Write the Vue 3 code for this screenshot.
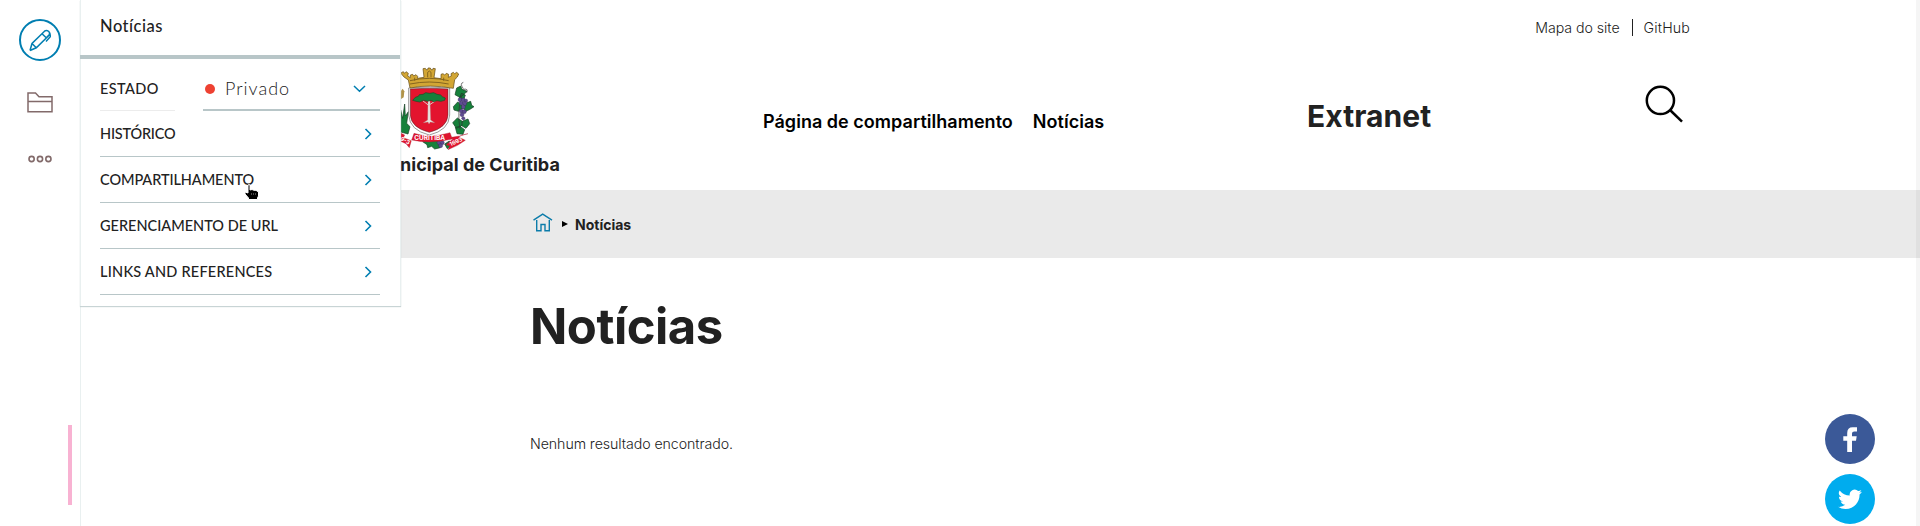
<script setup>
const sections = [
  { label: 'HISTÓRICO', cls: 'historico' },
  { label: 'COMPARTILHAMENTO', cls: 'compart' },
  { label: 'GERENCIAMENTO DE URL', cls: 'url' },
  { label: 'LINKS AND REFERENCES', cls: 'links' },
]
</script>

<template>
  <div class="page">
    <aside class="toolbar">
      <button class="edit" aria-label="Editar">
        <svg width="22" height="23" viewBox="0 0 22 23" fill="none" stroke="#007eb1" stroke-width="1.5">
          <path d="M1 21.5L3 14.5L15.500 2.200Q17.500 .6 19.500 2.300Q21.500 4.300 19.800 6.500L7.300 18.800L1 21.500M3 14.500L7.300 18.800M13 4.700L17.500 9M17.500 8.500L21 5L21.500 7.500L17 12.500" />
        </svg>
      </button>
      <svg class="folder" width="26" height="21" viewBox="0 0 26 21" fill="none" stroke="#826a6a" stroke-width="1.5">
        <path d="M1 1H8.500L12 4.700H25V19.800H1ZM1 9.500H25" />
      </svg>
      <svg class="more" width="24" height="8" viewBox="0 0 24 8" fill="none" stroke="#826a6a" stroke-width="1.6">
        <circle cx="3.600" cy="4" r="2.600" /><circle cx="12" cy="4" r="2.600" /><circle cx="20.400" cy="4" r="2.600" />
      </svg>
      <span class="handle"></span>
    </aside>

    <main class="site">
      <header class="header">
        <div class="toplinks">
          <span class="map">Mapa do site</span><i class="sep"></i><span class="git">GitHub</span>
        </div>
        <div class="brandrow">
          <div class="logo">
            <svg class="crest" width="80" height="95" viewBox="0 0 240 285">
              <!-- vine and wheat -->
              <g fill="#16813b" stroke="#153d22" stroke-width="2">
                <path d="M2 150L8 175L14 132L16 168L25 155L20 190L30 200L24 222L2 216Z" />
                <path d="M170 84l12-6 4 10 15 6-10 10-12 8-14-8ZM184 100l12 5-4 12-14-2ZM160 140l13-14 12 8 4 10-14 10-13-4ZM196 130l16-6 3 12 7 4-12 8-12 6-9-9ZM158 188l14-14 15 10-3 14-15 7ZM188 183l16-6 5 14-11 14-13-8ZM166 202l14-3 14 10-5 14-18-2Z" />
                <path d="M68 245l16-5 16 3 18-4-4 12 7 12-17 4-9-8-12 4-2-9ZM134 252l14-9 6 12-12 11Z" />
              </g>
              <path d="M190 86Q178 70 190 67M190 88Q206 85 200 98M187 100Q170 150 180 208" fill="none" stroke="#333" stroke-width="2" />
              <g fill="#5e4b92" stroke="#30284f" stroke-width="1">
                <circle cx="180" cy="119" r="6" /><circle cx="190" cy="120" r="6" /><circle cx="198" cy="122" r="5" /><circle cx="184" cy="130" r="6" /><circle cx="194" cy="131" r="6" /><circle cx="190" cy="141" r="6" />
                <circle cx="184" cy="153" r="6" /><circle cx="193" cy="155" r="6" /><circle cx="186" cy="164" r="6" /><circle cx="190" cy="175" r="5" /><circle cx="117" cy="248" r="6" /><circle cx="127" cy="248" r="6" /><circle cx="122" cy="257" r="6" />
              </g>
              <path d="M2 94l6-8 5 8-2 18-9 6Z" fill="#b19348" />
              <!-- shield -->
              <path d="M26 84Q88 78 149 84V165Q147 211 88 225Q29 211 26 165Z" fill="#fff" stroke="#666" stroke-width="2" />
              <path d="M31 87Q88 82 144 87V165Q142 203 88 217Q33 203 31 165Z" fill="#e3142e" stroke="#4b2020" stroke-width="1.500" />
              <path d="M84 122L83 180L70 188L84 186L87 192L91 186L104 188L92 180L90 122Z" fill="#e9e4e0" stroke="#b08080" stroke-width="1" />
              <path d="M68 122L86 136L107 122" fill="none" stroke="#d9c9c4" stroke-width="3" />
              <path d="M38 121l8-9 9-3 3-5 11-1 8-5 12 2 12-2 10 5 11 2 5 5 9 4-2 7-11 3-12-2-10 3-8-4-11 3-11-3-12 5-11-2Z" fill="#16813b" stroke="#1c4a26" stroke-width="2" />
              <!-- mural crown -->
              <path d="M2 39l8-4 3 5 5-5 7 5-2 8 8 5 0-8 7-2 3 5 7-4 5 5-1 6 20-3-3-26 7-1 2 4h5l1-5h7l2 5h5l1-4 7 1-4 27 21 3V43l6-2 5 4 5-5 7 3-1 9 9-4-1-7 7-4 4 4 6-4 6 5-4 9-8 8-4 26Q88 72 30 84L25 60L12 51Z" fill="#d2a634" stroke="#5e4510" stroke-width="2" />
              <path d="M30 62Q88 48 146 62M30 72Q88 60 146 72M83 52V37q5-8 10 0v15M44 62v-9M131 62v-9" fill="none" stroke="#76591a" stroke-width="2.500" />
              <!-- ribbon -->
              <g fill="#df142f" stroke="#a3142b" stroke-width="1">
                <path d="M2 219L14 225L10 233L34 242L28 263L18 251L2 244Z" />
                <path d="M204 221L187 225L176 231L196 241Q174 258 144 269L149 258L138 254L158 238L154 232Q176 230 204 221Z" />
                <path d="M42 220Q90 236 150 218L157 237Q91 253 35 240Z" />
              </g>
              <text x="43" y="240" class="ribbon" textLength="92" lengthAdjust="spacingAndGlyphs">CURITIBA</text>
              <text x="152" y="259" class="ribbon year" transform="rotate(-24 152 259)">1693</text>
              <text x="0" y="240" class="ribbon year" transform="rotate(28 0 240)">9-3</text>
            </svg>
            <strong class="city">nicipal de Curitiba</strong>
          </div>
          <nav class="nav"><span class="n1">Página de compartilhamento</span><span class="n2">Notícias</span></nav>
          <strong class="extranet">Extranet</strong>
          <svg class="search" width="38" height="38" viewBox="0 0 38 38" fill="none" stroke="#000" stroke-width="2.500">
            <circle cx="15.400" cy="15.400" r="13.600" /><path d="M25 25L37 36.700" />
          </svg>
        </div>
      </header>

      <div class="crumbs">
        <svg width="20" height="19" viewBox="0 0 20 19" fill="none" stroke="#0c7caa" stroke-width="1.400">
          <path d="M.5 7.200L9.700 1.200L19 7.200M3.700 7V17.700H8V11.500H12V17.700H16.300V7" />
        </svg>
        <i class="arrow"></i>
        <strong>Notícias</strong>
      </div>

      <section class="content">
        <h1>Notícias</h1>
        <p>Nenhum resultado encontrado.</p>
      </section>
    </main>

    <section class="panel">
      <h2>Notícias</h2>
      <div class="body">
        <div class="state">
          <span class="label estado">ESTADO</span>
          <div class="select">
            <i class="dot"></i><span class="value">Privado</span>
            <svg width="13" height="8" viewBox="0 0 13 8" fill="none" stroke="#007eb1" stroke-width="1.500"><path d="M1 1L6.500 6.300L12 1" /></svg>
          </div>
        </div>
        <div v-for="s in sections" :key="s.label" class="row">
          <span class="label" :class="s.cls">{{ s.label }}</span>
          <svg width="8" height="12" viewBox="0 0 8 12" fill="none" stroke="#007eb1" stroke-width="1.600"><path d="M1.500 1L6.500 6L1.500 11" /></svg>
        </div>
      </div>
    </section>

    <svg class="cursor" width="16" height="17" viewBox="0 0 16 17">
      <path d="M4 1Q5 0 6 1V6L8 5.500L10 6.300L12 6.300L13 7L14.500 8V12L13.500 14V15.500H4.500V14L1 10V8L4 9Z" fill="#000" stroke="#fff" stroke-width="1" />
      <path d="M7.500 9v2M9.500 9v2M11.500 9v2" stroke="#777" stroke-width=".6" />
    </svg>

    <div class="social">
      <span class="fb"><svg width="14" height="25" viewBox="0 0 14 25"><path fill="#fff" d="M4.200 25V13.700H.3V9.300H4.200V6Q4.200.3 9.700.3H14V4.500H11.200Q9 4.500 9 6.500V9.300H13.700L13 13.700H9V25Z" /></svg></span>
      <span class="tw"><svg width="24" height="21" viewBox="0 0 24 20"><path fill="#fff" d="M23.950 2.360a9.800 9.800 0 0 1-2.820.77A4.930 4.930 0 0 0 23.290.4a9.900 9.900 0 0 1-3.130 1.200 4.920 4.920 0 0 0-8.380 4.480A13.960 13.960 0 0 1 1.640.93a4.920 4.920 0 0 0 1.520 6.570 4.900 4.900 0 0 1-2.230-.61v.06a4.920 4.920 0 0 0 3.950 4.820 5 5 0 0 1-2.210.09 4.940 4.940 0 0 0 4.600 3.420A9.870 9.870 0 0 1 0 17.320a13.940 13.940 0 0 0 7.550 2.210c9.050 0 14-7.500 14-13.990 0-.21 0-.42-.02-.63a9.940 9.940 0 0 0 2.420-2.550z" /></svg></span>
    </div>
    <span class="scroll"></span>
  </div>
</template>

<style>
body { margin: 0; background: #fff; overflow: hidden; }
</style>

<style scoped>
* { box-sizing: border-box; }
.page { position: relative; display: flex; width: 1920px; height: 526px; overflow: hidden; font-family: Inter, "Liberation Sans", sans-serif; color: #212121; background: #fff; }
.toolbar { position: relative; flex: none; width: 81px; border-right: 1px solid #e9f0f0; display: flex; flex-direction: column; align-items: center; padding-top: 19px; }
.edit { width: 42px; height: 42px; padding: 0; border: 2px solid #007eb1; border-radius: 50%; background: none; display: flex; align-items: center; justify-content: center; }
.folder { margin-top: 31px; }
.more { margin-top: 42px; }
.handle { position: absolute; left: 68px; top: 425px; width: 4px; height: 80px; background: #f8b2d2; }

.site { flex: 1; min-width: 0; }
.header { height: 190px; padding-right: 230px; }
.toplinks { height: 60px; padding-top: 18px; display: flex; justify-content: flex-end; font-size: 14.200px; font-weight: 300; line-height: 20px; }
.map { letter-spacing: -.05px; }
.git { letter-spacing: .15px; }
.sep { width: 1px; height: 17px; margin: 1px 11px 0 12px; background: #212121; }
.brandrow { display: flex; height: 130px; }
.logo { width: 363px; margin-left: 319px; display: flex; flex-direction: column; }
.crest { display: block; flex: none; }
.city { font-size: 18px; line-height: 22px; margin-top: -1px; white-space: nowrap; letter-spacing: .03px; }
.ribbon { fill: #fff; font: 700 18px Inter, sans-serif; }
.year { font-size: 17px; }
.nav { display: flex; gap: 20px; width: 544px; padding-top: 51px; color: #000; font-size: 18px; font-weight: 600; line-height: 22px; white-space: nowrap; letter-spacing: .03px; }
.extranet { width: 338px; padding-top: 38px; font-size: 30px; line-height: 36px; letter-spacing: .05px; }
.search { margin-top: 25px; flex: none; }

.crumbs { height: 68px; padding-left: 452px; background: #eaeaea; display: flex; align-items: center; font-size: 14px; }
.crumbs svg { margin-top: -3px; }
.crumbs strong { padding-top: 1px; }
.arrow { margin: 0 7px 0 9px; border-left: 6px solid #000; border-top: 3px solid transparent; border-bottom: 3px solid transparent; }
.content { padding: 39px 0 0 449px; }
h1 { margin: 0; font-size: 49px; font-weight: 700; line-height: 60px; letter-spacing: -.48px; }
p { margin: 76px 0 0; font-size: 14.200px; font-weight: 300; line-height: 21px; letter-spacing: -.08px; }

.panel { position: absolute; left: 80px; top: 0; width: 321px; height: 306px; background: #fff; border: solid #e9f0f0; border-width: 0 1px 0 1px; box-shadow: 0 1px 1px #c8d4d5; font-family: Lato, "Open Sans", sans-serif; color: #222; }
h2 { height: 59px; margin: 0 0 0 -1px; padding: 16px 0 0 20px; border-bottom: 4px solid #b8c6c8; font-size: 16.500px; font-weight: 500; line-height: 20px; letter-spacing: .5px; }
.body { padding: 15px 20px 0 19px; }
.state { display: flex; justify-content: space-between; height: 37px; }
.label { font-size: 14.500px; font-weight: 500; line-height: 20px; white-space: nowrap; }
.estado { width: 75px; padding-top: 5px; border-bottom: 1px solid #ececec; letter-spacing: .4px; }
.historico { letter-spacing: -.2px; }
.compart { letter-spacing: -.08px; }
.url { letter-spacing: 0; }
.links { letter-spacing: .23px; }
.select { width: 177px; border-bottom: 2px solid #b8c6c8; display: flex; align-items: center; padding: 0 14px 5px 2px; }
.dot { width: 10px; height: 10px; border-radius: 50%; background: #ee4132; }
.value { flex: 1; margin: -2px 0 0 10px; font-size: 18px; font-weight: 300; letter-spacing: 1px; }
.row { height: 46px; display: flex; align-items: center; justify-content: space-between; border-bottom: 1px solid #b8c6c8; padding-right: 8px; }

.cursor { position: absolute; left: 244px; top: 184px; }
.social { position: absolute; left: 1825px; top: 414px; display: flex; flex-direction: column; gap: 10px; }
.social span { width: 50px; height: 50px; border-radius: 50%; display: flex; align-items: center; justify-content: center; }
.fb { background: #3b5998; }
.tw { background: #00acee; }
.scroll { position: absolute; right: 0; top: 0; width: 4px; height: 526px; background: rgba(0, 0, 0, .04); }
</style>
